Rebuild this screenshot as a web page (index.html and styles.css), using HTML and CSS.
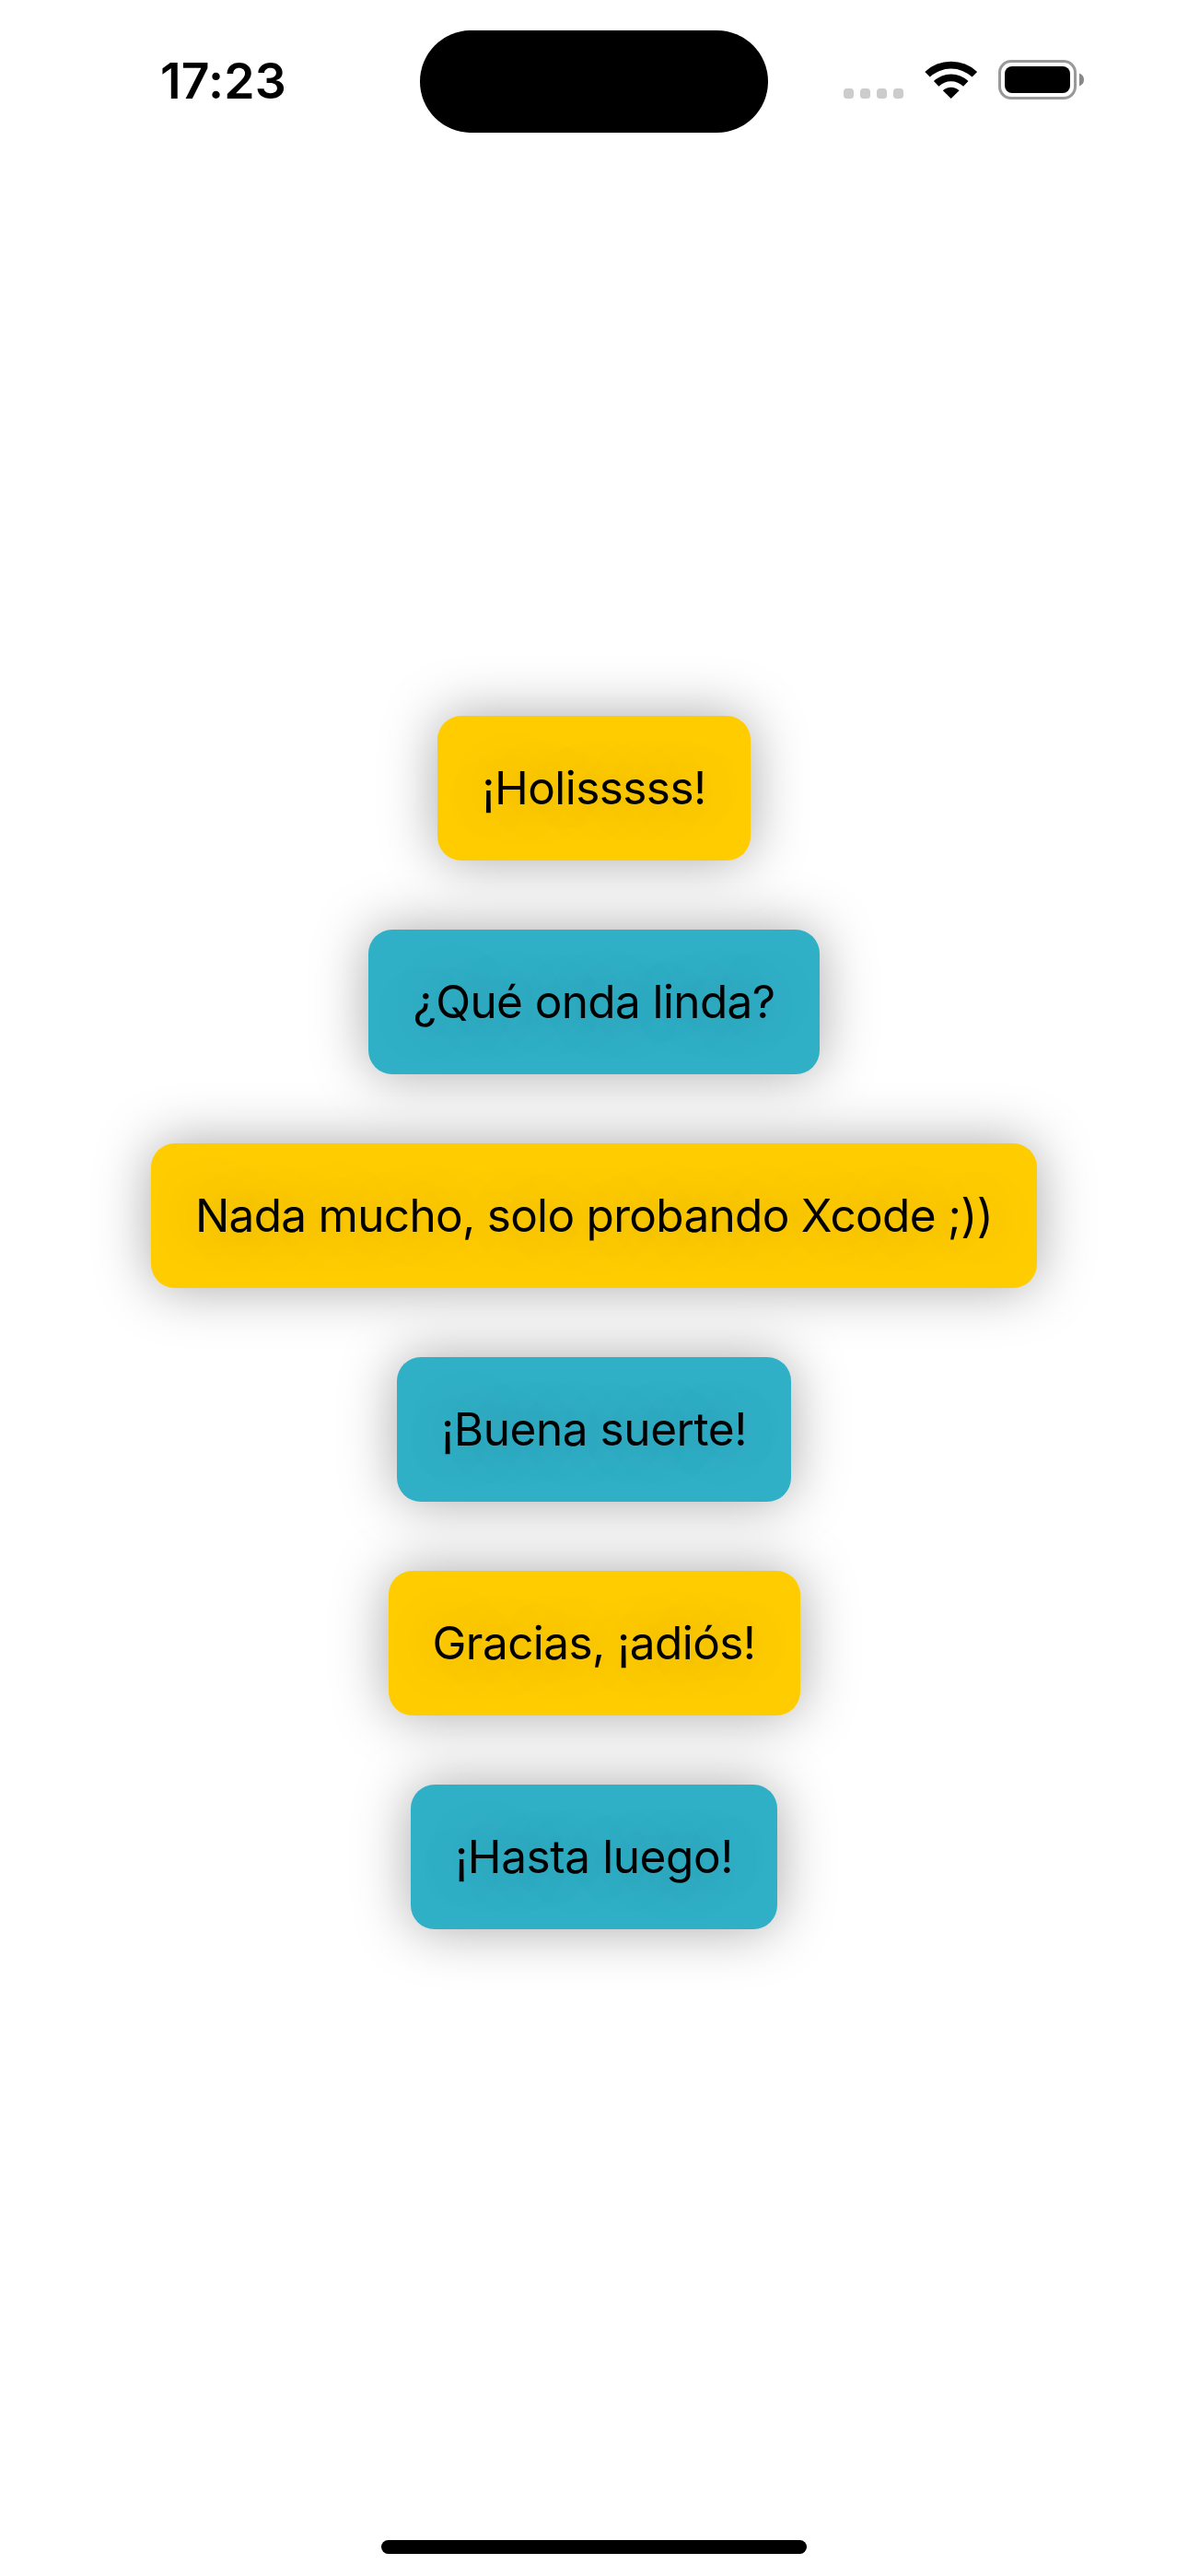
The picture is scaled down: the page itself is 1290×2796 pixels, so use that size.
FILE: index.html
```html
<!DOCTYPE html>
<html lang="es">
<head>
  <meta charset="utf-8">
  <title>Chat</title>
  <link rel="stylesheet" href="styles.css">
</head>
<body>
  <div class="screen">
    <header class="status-bar">
      <div class="status-left"><time class="clock">17:23</time></div>
      <div class="island"></div>
      <div class="status-right">
        <div class="signal"><i class="dot"></i><i class="dot"></i><i class="dot"></i><i class="dot"></i></div>
        <svg class="wifi" width="58" height="43" viewBox="0 0 58 43" aria-hidden="true">
          <path d="M0.3 12.9 A41.5 41.5 0 0 1 57.1 12.9 L51.6 18.6 A33.5 33.5 0 0 0 5.8 18.6 Z"/>
          <path d="M9.9 23 A27.2 27.2 0 0 1 47.5 23 L42 28.7 A19.2 19.2 0 0 0 15.4 28.7 Z"/>
          <path d="M19.8 33.2 A13 13 0 0 1 37.6 33.2 L28.7 42 Z"/>
        </svg>
        <svg class="battery" width="94" height="44" viewBox="0 0 94 44" aria-hidden="true">
          <rect x="1.5" y="1.5" width="82" height="40" rx="12.5" fill="none" stroke="#999" stroke-width="3"/>
          <rect x="7" y="7" width="71" height="29" rx="8"/>
          <path d="M88 14.5 Q93 16.5 93 21.5 Q93 26.5 88 28.5 Z" fill="#888"/>
        </svg>
      </div>
    </header>
    <main class="messages">
      <p class="bubble yellow greeting">¡Holisssss!</p>
      <p class="bubble teal question">¿Qué onda linda?</p>
      <p class="bubble yellow answer">Nada mucho, solo probando Xcode ;))</p>
      <p class="bubble teal luck">¡Buena suerte!</p>
      <p class="bubble yellow thanks">Gracias, ¡adiós!</p>
      <p class="bubble teal farewell">¡Hasta luego!</p>
    </main>
    <footer class="home-area"><div class="home-indicator"></div></footer>
  </div>
</body>
</html>
```
FILE: styles.css
```css
* {
  box-sizing: border-box;
}

body {
  margin: 0;
  background: #fff;
  color: #000;
  font-family: Inter, "Liberation Sans", sans-serif;
}

.screen {
  width: 1290px;
  height: 2796px;
  display: flex;
  flex-direction: column;
  overflow: hidden;
}

/* Status bar */
.status-bar {
  height: 177px;
  flex: none;
  display: grid;
  grid-template-columns: 456px 378px 456px;
  align-items: start;
}

.status-left {
  padding: 56px 0 0 174px;
}

.clock {
  display: block;
  font-size: 53.5px;
  font-weight: 600;
  line-height: 64px;
  letter-spacing: 0.2px;
}

.island {
  margin-top: 33px;
  height: 111px;
  border-radius: 56px;
  background: #000;
}

.status-right {
  display: flex;
  padding: 65px 0 0 82px;
}

.signal {
  display: flex;
  gap: 7px;
  margin: 31px 23px 0 0;
}

.dot {
  width: 11px;
  height: 11px;
  border-radius: 3.5px;
  background: #ccc;
}

.wifi,
.battery {
  display: block;
}

.battery {
  margin-left: 22px;
}

/* Messages */
.messages {
  flex: 1;
  display: flex;
  flex-direction: column;
  align-items: center;
  justify-content: center;
  gap: 75px;
}

.bubble {
  margin: 0;
  height: 157px;
  padding: 48px;
  border-radius: 26px;
  font-size: 49.5px;
  line-height: 61px;
  white-space: nowrap;
  box-shadow: 0 0 60px rgba(0, 0, 0, 0.34);
  text-shadow: 0 0 60px rgba(0, 0, 0, 0.28);
}

.yellow {
  background: #fc0;
}

.teal {
  background: #30b0c7;
}

.greeting {
  letter-spacing: -0.57px;
}

.question {
  letter-spacing: -0.61px;
}

.answer {
  letter-spacing: -0.7px;
}

.luck {
  letter-spacing: -0.44px;
}

.thanks {
  letter-spacing: -0.57px;
}

.farewell {
  letter-spacing: -0.42px;
}

/* Home indicator */
.home-area {
  height: 102px;
  flex: none;
  display: flex;
  justify-content: center;
  align-items: flex-end;
  padding-bottom: 24px;
}

.home-indicator {
  width: 462px;
  height: 15px;
  border-radius: 8px;
  background: #000;
}
```
